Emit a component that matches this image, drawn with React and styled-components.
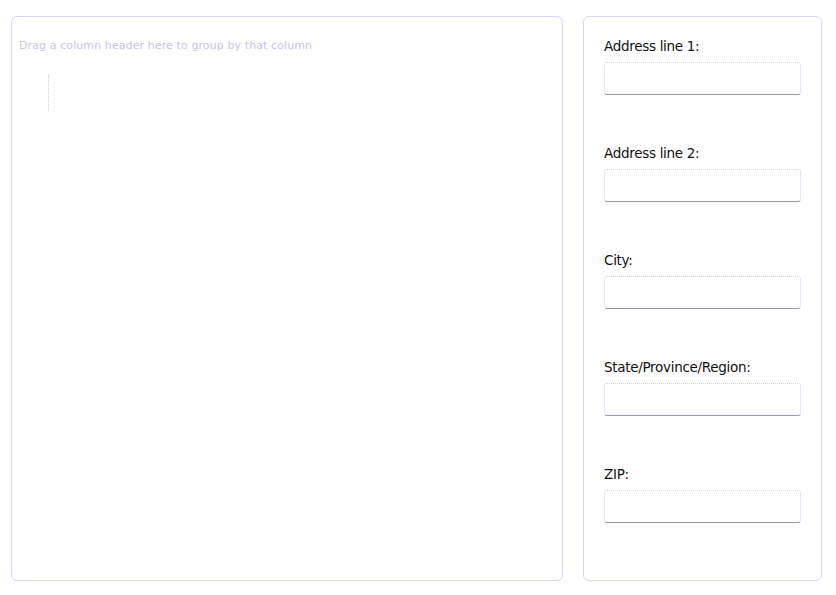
import React from "react";
import styled, { createGlobalStyle } from "styled-components";

const Global = createGlobalStyle`
  html, body { margin: 0; padding: 0; background: #fff; }
  body { font-family: "DejaVu Sans", Verdana, sans-serif; }
`;

const Page = styled.div`
  display: flex;
  gap: 20px;
  padding: 16px 14px 14px 11px;
  height: 595px;
  box-sizing: border-box;
`;

const GridPanel = styled.div`
  width: 552px;
  height: 565px;
  box-sizing: border-box;
  border: 1px solid #d8d4fa;
  border-radius: 6px;
  padding: 22px 7px;
`;

const GroupHint = styled.div`
  font-size: 11px;
  color: #c9c3ea;
  letter-spacing: 0.1px;
`;

const Indent = styled.div`
  margin: 23px 0 0 29px;
  height: 36px;
  border-left: 1px dotted #cfc9f5;
`;

const FormPanel = styled.div`
  width: 239px;
  height: 565px;
  box-sizing: border-box;
  border: 1px solid #d8d4fa;
  border-radius: 6px;
  padding: 21px 20px;
  display: flex;
  flex-direction: column;
  gap: 50px;
`;

const Field = styled.div`
  display: flex;
  flex-direction: column;
  gap: 7px;
`;

const Label = styled.label`
  font-size: 13.5px;
  line-height: 17px;
  letter-spacing: -0.3px;
  color: #111;
`;

const Input = styled.div`
  height: 33px;
  width: 197px;
  box-sizing: border-box;
  border: 1px dotted #d0ccf5;
  border-bottom: 1px solid #9a98b0;
  border-radius: 3px;
`;

const fields = ["Address line 1:", "Address line 2:", "City:", "State/Province/Region:", "ZIP:"];

export default function App() {
  return (
    <>
      <Global />
      <Page>
        <GridPanel>
          <GroupHint>Drag a column header here to group by that column</GroupHint>
          <Indent />
        </GridPanel>
        <FormPanel>
          {fields.map((f) => (
            <Field key={f}>
              <Label>{f}</Label>
              <Input />
            </Field>
          ))}
        </FormPanel>
      </Page>
    </>
  );
}
